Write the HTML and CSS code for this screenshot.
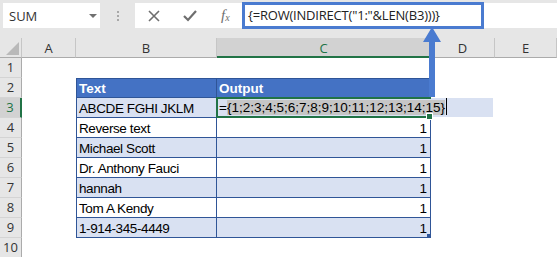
FILE: index.html
```html
<!DOCTYPE html>
<html lang="en">
<head>
    <meta charset="UTF-8">
    <title>Reverse text</title>
    <link rel="stylesheet" href="styles.css">
</head>
<body>
    <div class="toolbar">
        <div class="namebox">
            <span>SUM</span>
            <svg class="caret" width="8" height="4" viewBox="0 0 8 4"><path d="M0 0H8L4 4Z" fill="#707070"/></svg>
        </div>
        <div class="grip"><i></i><i></i><i></i></div>
        <div class="fxbar">
            <div class="buttons">
                <svg width="12" height="12" viewBox="0 0 12 12"><path d="M1 1L11 11M11 1L1 11" stroke="#6e6e6e" stroke-width="1.6"/></svg>
                <svg width="14" height="12" viewBox="0 0 14 12"><path d="M1 6L5 10L13 1" stroke="#6e6e6e" stroke-width="2.2" fill="none"/></svg>
                <span class="fx">f<sub>x</sub></span>
            </div>
            <div class="formula">{=ROW(INDIRECT("1:"&amp;LEN(B3)))}</div>
        </div>
    </div>

    <div class="sheet">
        <div class="corner"></div>
        <div class="colhead">A</div>
        <div class="colhead">B</div>
        <div class="colhead active">C</div>
        <div class="colhead">D</div>
        <div class="colhead">E</div>

        <div class="rowhead">1</div><div></div><div></div><div></div><div></div><div></div>

        <div class="rowhead">2</div><div></div>
        <div class="cell b head">Text</div>
        <div class="cell c head">Output</div>
        <div></div><div></div>

        <div class="rowhead active">3</div><div></div>
        <div class="cell b band">ABCDE FGHI JKLM</div>
        <div class="cell c band edit">
            <div class="editbox">=<span class="sel">{1;2;3;4;5;6;7;8;9;10;11;12;13;14;15}</span><i class="cursor"></i></div>
            <i class="handle"></i>
        </div>
        <div></div><div></div>

        <div class="rowhead">4</div><div></div>
        <div class="cell b">Reverse text</div>
        <div class="cell c num">1</div>
        <div></div><div></div>

        <div class="rowhead">5</div><div></div>
        <div class="cell b band">Michael Scott</div>
        <div class="cell c band num">1</div>
        <div></div><div></div>

        <div class="rowhead">6</div><div></div>
        <div class="cell b">Dr. Anthony Fauci</div>
        <div class="cell c num">1</div>
        <div></div><div></div>

        <div class="rowhead">7</div><div></div>
        <div class="cell b band">hannah</div>
        <div class="cell c band num">1</div>
        <div></div><div></div>

        <div class="rowhead">8</div><div></div>
        <div class="cell b">Tom A Kendy</div>
        <div class="cell c num">1</div>
        <div></div><div></div>

        <div class="rowhead">9</div><div></div>
        <div class="cell b band">1-914-345-4449</div>
        <div class="cell c band num last">1<i class="resize"></i></div>
        <div></div><div></div>

        <div class="rowhead">10</div><div></div><div></div><div></div><div></div><div></div>
    </div>

    <!-- callout from the formula bar -->
    <div class="callout"></div>
    <svg class="arrow" width="20" height="72" viewBox="0 0 20 72">
        <path d="M10 0L19 15H13V70H7V15H1Z" fill="#4a7bd0"/>
    </svg>
</body>
</html>
```

FILE: styles.css
```css
body {
    margin: 0;
    width: 557px;
    height: 257px;
    overflow: hidden;
    background: #ffffff;
    font-family: 'Liberation Sans', sans-serif;
    position: relative;
}
.toolbar {
    height: 38px;
    background: #e6e6e6;
    display: flex;
    align-items: flex-start;
    padding-top: 3px;
    box-sizing: border-box;
}
.namebox {
    margin-left: 3px;
    width: 97px;
    height: 25px;
    background: #ffffff;
    display: flex;
    align-items: center;
    justify-content: space-between;
    padding: 0 3px 0 6px;
    box-sizing: border-box;
    font-family: 'Open Sans', sans-serif;
    font-size: 13px;
    color: #333;
}
.grip {
    width: 35px;
    height: 25px;
    display: flex;
    flex-direction: column;
    align-items: center;
    justify-content: center;
    gap: 2px;
}
.grip i {
    width: 2px;
    height: 2px;
    background: #a8a8a8;
}
.fxbar {
    flex: 1;
    height: 25px;
    background: #ffffff;
    display: flex;
}
.buttons {
    width: 107px;
    display: flex;
    align-items: center;
    padding-left: 13px;
    gap: 23px;
    box-sizing: border-box;
}
.fx {
    font-family: 'Liberation Serif', serif;
    font-style: italic;
    font-size: 15px;
    color: #6e6e6e;
    margin-left: 1px;
}
.fx sub {
    font-size: 10px;
    vertical-align: -1px;
}
.formula {
    padding-left: 6px;
    line-height: 25px;
    font-family: 'Open Sans', sans-serif;
    font-size: 13px;
    color: #222;
    white-space: nowrap;
    letter-spacing: -0.2px;
}

.sheet {
    display: grid;
    grid-template-columns: 22px 54px 141px 214px 64px 62px;
    grid-auto-rows: 20px;
}
.corner {
    background: #e6e6e6;
    border-right: 1px solid #c6c6c6;
    border-bottom: 1px solid #ababab;
    box-sizing: border-box;
    position: relative;
}
.corner::after {
    content: '';
    position: absolute;
    right: 2px;
    bottom: 2px;
    border-left: 13px solid transparent;
    border-bottom: 13px solid #b9b9b9;
}
.colhead {
    background: #e6e6e6;
    border-right: 1px solid #c6c6c6;
    border-bottom: 1px solid #ababab;
    box-sizing: border-box;
    text-align: center;
    font-family: 'Open Sans', sans-serif;
    font-size: 13px;
    line-height: 21px;
    color: #333;
}
.colhead.active {
    background: #d2d2d2;
    border-bottom: 2px solid #217346;
    color: #217346;
}
.rowhead {
    background: #e6e6e6;
    border-right: 1px solid #ababab;
    border-bottom: 1px solid #d4d4d4;
    box-sizing: border-box;
    text-align: center;
    font-family: 'Open Sans', sans-serif;
    font-size: 13px;
    line-height: 19px;
    color: #333;
}
.rowhead.active {
    background: #d2d2d2;
    border-right: 2px solid #217346;
    color: #217346;
}

.cell {
    border-bottom: 1px solid #2f5597;
    border-right: 1px solid #2f5597;
    box-sizing: border-box;
    font-size: 13.5px;
    line-height: 21px;
    padding: 0 3px 0 2px;
    color: #000;
    white-space: nowrap;
    position: relative;
}
.cell.b {
    border-left: 1px solid #2f5597;
    letter-spacing: -0.4px;
}
.cell.head {
    background: #4472c4;
    color: #ffffff;
    font-weight: bold;
    border-top: 1px solid #2f5597;
    line-height: 19px;
    letter-spacing: 0;
}
.cell.band {
    background: #d9e1f2;
}
.cell.num {
    text-align: right;
}
.edit {
    overflow: visible;
    z-index: 2;
}
.edit::after {
    content: '';
    position: absolute;
    left: -1px;
    top: -1px;
    right: -1px;
    bottom: -1px;
    border: 2px solid #217346;
    border-right: none;
}
.editbox {
    position: absolute;
    left: 0;
    top: 0;
    width: 276px;
    height: 19px;
    padding-left: 2px;
    box-sizing: border-box;
    background: #d9e1f2;
    line-height: 20px;
}
.sel {
    background: #c6c6c6;
}
.cursor {
    display: inline-block;
    width: 1px;
    height: 17px;
    background: #000;
    vertical-align: -3px;
    margin-left: 1px;
}
.handle {
    position: absolute;
    right: -3px;
    bottom: -3px;
    width: 5px;
    height: 5px;
    background: #217346;
    border: 1px solid #ffffff;
    z-index: 3;
}
.resize {
    position: absolute;
    right: -1px;
    bottom: -1px;
    width: 4px;
    height: 4px;
    background: #2f5597;
}

.callout {
    position: absolute;
    left: 242px;
    top: 2px;
    width: 242px;
    height: 27px;
    border: 3px solid #4a7bd0;
    box-sizing: border-box;
}
.arrow {
    position: absolute;
    left: 422px;
    top: 27px;
    z-index: 5;
}
```
